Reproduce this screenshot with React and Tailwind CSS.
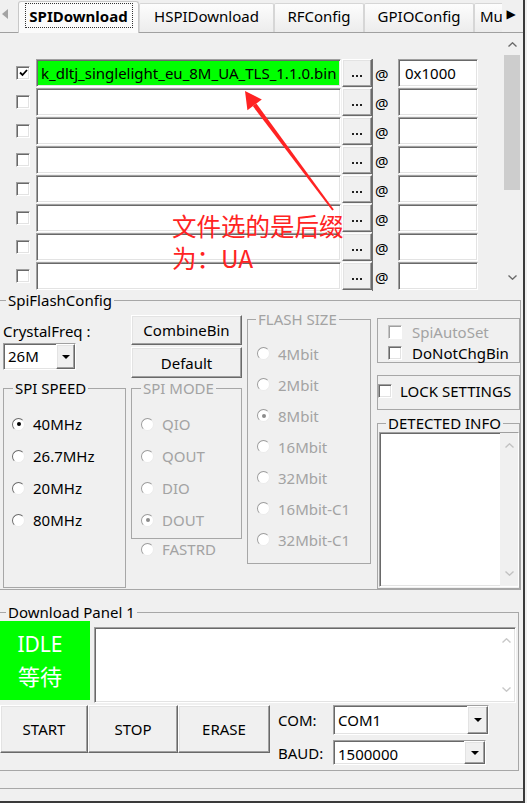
import React from "react";

const sunken =
  "border border-t-[#a0a0a0] border-l-[#a0a0a0] border-r-white border-b-white shadow-[inset_1px_1px_0_#696969,inset_-1px_-1px_0_#e3e3e3]";
const raised =
  "border border-t-white border-l-white border-r-[#696969] border-b-[#696969] bg-[#f0f0f0] shadow-[inset_-1px_-1px_0_#a0a0a0,inset_1px_1px_0_#e3e3e3]";
const groupLine = "border-[#a7a7a7]";

function Check({ checked = false, disabled = false }) {
  return (
    <span
      className={`flex h-[14px] w-[14px] shrink-0 items-center justify-center border border-r-white border-b-white bg-white ${
        disabled
          ? "border-t-[#c4c4c4] border-l-[#c4c4c4] shadow-[inset_1px_1px_0_#a0a0a0]"
          : "border-t-[#a0a0a0] border-l-[#a0a0a0] shadow-[inset_1px_1px_0_#696969,inset_-1px_-1px_0_#e3e3e3]"
      }`}
    >
      {checked && (
        <svg width="9" height="8" viewBox="0 0 9 8">
          <path d="M1 3.5 L3.5 6 L8 1" fill="none" stroke="#000" strokeWidth="1.8" />
        </svg>
      )}
    </span>
  );
}

function Radio({ checked = false, disabled = false }) {
  return (
    <span
      className={`flex h-[13px] w-[13px] shrink-0 items-center justify-center rounded-full border-[1.5px] border-r-[#ececec] border-b-[#ececec] bg-white ${
        disabled ? "border-t-[#9c9c9c] border-l-[#9c9c9c]" : "border-t-[#6a6a6a] border-l-[#6a6a6a]"
      }`}
    >
      {checked && (
        <span className={`h-[4px] w-[4px] rounded-full ${disabled ? "bg-[#8c8c8c]" : "bg-black"}`} />
      )}
    </span>
  );
}

function DownTri() {
  return (
    <svg width="8" height="4" viewBox="0 0 8 4">
      <polygon points="0,0 8,0 4,4" fill="#000" />
    </svg>
  );
}

function Chevron({ up = true, color = "#6a6a6a" }) {
  return (
    <svg width="9" height="5" viewBox="0 0 9 5">
      <polyline
        points={up ? "0.5,4.5 4.5,0.8 8.5,4.5" : "0.5,0.5 4.5,4.2 8.5,0.5"}
        fill="none"
        stroke={color}
        strokeWidth="1.4"
      />
    </svg>
  );
}

function TabBar() {
  return (
    <div className="flex h-[33px] shrink-0 items-start border-b border-[#a0a0a0]">
      <div className="flex h-[28px] w-[18px] shrink-0 items-center pl-[2px]">
        <span className="h-0 w-0 border-y-[5px] border-r-[6px] border-y-transparent border-r-[#a3a3a3]" />
      </div>
      <div className="flex h-[33px] w-[484px] shrink-0 items-start overflow-hidden">
        <div className="relative z-10 mt-[1px] flex h-[32px] w-[121px] shrink-0 items-start justify-center rounded-t-[3px] border border-b-0 border-[#c8c8c8] bg-[#fbfbfb] pt-[1px]">
          <span className="flex h-[25px] w-[108px] items-center justify-center border border-dotted border-[#333] text-[15px] font-bold">
            SPIDownload
          </span>
        </div>
        <div className="mt-[3px] flex h-[29px] w-[135px] shrink-0 items-center justify-center rounded-t-[2px] border border-b-0 border-[#d6d6d6] bg-linear-to-b from-[#fdfdfd] to-[#ececec] pb-[5px]">
          HSPIDownload
        </div>
        <div className="mt-[3px] flex h-[29px] w-[90px] shrink-0 items-center justify-center rounded-t-[2px] border border-b-0 border-[#d6d6d6] bg-linear-to-b from-[#fdfdfd] to-[#ececec] pb-[5px]">
          RFConfig
        </div>
        <div className="mt-[3px] flex h-[29px] w-[110px] shrink-0 items-center justify-center rounded-t-[2px] border border-b-0 border-[#d6d6d6] bg-linear-to-b from-[#fdfdfd] to-[#ececec] pb-[5px]">
          GPIOConfig
        </div>
        <div className="mt-[3px] flex h-[29px] w-[80px] shrink-0 items-center rounded-t-[2px] border border-b-0 border-[#d6d6d6] bg-linear-to-b from-[#fdfdfd] to-[#ececec] pb-[5px] pl-[5px]">
          Mu
        </div>
      </div>
      <div className="flex h-[28px] w-[18px] shrink-0 items-center justify-center font-['DejaVu_Sans',sans-serif] text-[12px] leading-[14px] text-black">
        ▶
      </div>
    </div>
  );
}

function FileRow({ first }) {
  return (
    <div className="flex h-[29px] items-start">
      <div className="flex h-[28px] w-[36px] items-center pl-[16px]">
        <Check checked={first} />
      </div>
      <div
        className={`h-[28px] w-[305px] overflow-hidden whitespace-nowrap pl-[4px] leading-[26px] ${sunken} ${
          first ? "bg-[#00ff00]" : "bg-white"
        }`}
      >
        {first ? "k_dltj_singlelight_eu_8M_UA_TLS_1.1.0.bin" : ""}
      </div>
      <div className={`ml-[1px] flex h-[28px] w-[30px] items-end justify-center gap-[2px] pb-[9px] ${raised}`}>
        <span className="h-[2px] w-[2px] bg-[#222]" />
        <span className="h-[2px] w-[2px] bg-[#222]" />
        <span className="h-[2px] w-[2px] bg-[#222]" />
      </div>
      <div className="flex h-[29px] w-[26px] items-center border-l border-[#707070] pl-[2px]">@</div>
      <div className={`h-[28px] w-[80px] bg-white pl-[6px] leading-[26px] ${sunken}`}>
        {first ? "0x1000" : ""}
      </div>
    </div>
  );
}

function FileRows() {
  const rows = [0, 1, 2, 3, 4, 5, 6, 7];
  return (
    <div className="flex h-[258px] shrink-0">
      <div className="w-[502px] pt-[26px]">
        {rows.map((i) => (
          <FileRow key={i} first={i === 0} />
        ))}
      </div>
      <div className="flex w-[20px] flex-col">
        <div className="flex h-[22px] items-center justify-center">
          <Chevron up />
        </div>
        <div className="mx-[2px] h-[135px] bg-[#cdcdcd]" />
        <div className="flex-1" />
        <div className="mb-[4px] flex h-[20px] items-center justify-center">
          <Chevron up={false} />
        </div>
      </div>
    </div>
  );
}

function RadioRow({ label, checked, disabled, rowClass }) {
  return (
    <div className={`flex items-center ${rowClass}`}>
      <Radio checked={checked} disabled={disabled} />
      <span className={disabled ? "text-[#a3a3a3]" : "text-black"}>{label}</span>
    </div>
  );
}

function FlashConfig() {
  return (
    <fieldset className={`h-[299px] w-[521px] shrink-0 border border-l-0 ${groupLine}`}>
      <legend className="ml-[6px] px-[2px] leading-[18px]">SpiFlashConfig</legend>
      <div className="flex items-start">
        {/* column A */}
        <div className="ml-[3px] flex w-[123px] flex-col">
          <div className="mt-[13px] h-[18px] leading-[18px]">CrystalFreq :</div>
          <div className={`mt-[3px] flex h-[27px] w-[73px] bg-white ${sunken}`}>
            <div className="flex-1 pl-[4px] leading-[25px]">26M</div>
            <div className={`flex w-[19px] items-center justify-center ${raised}`}>
              <DownTri />
            </div>
          </div>
          <fieldset className={`mt-[9px] h-[209px] border ${groupLine}`}>
            <legend className="ml-[9px] px-[2px] leading-[18px]">SPI SPEED</legend>
            <div className="mt-[11px]">
              <RadioRow label="40MHz" checked rowClass="h-[32px] pl-[8px] gap-[8px]" />
              <RadioRow label="26.7MHz" rowClass="h-[32px] pl-[8px] gap-[8px]" />
              <RadioRow label="20MHz" rowClass="h-[32px] pl-[8px] gap-[8px]" />
              <RadioRow label="80MHz" rowClass="h-[32px] pl-[8px] gap-[8px]" />
            </div>
          </fieldset>
        </div>

        {/* column B */}
        <div className="ml-[5px] flex w-[111px] flex-col">
          <div className={`mt-[6px] flex h-[30px] items-center justify-center ${raised}`}>CombineBin</div>
          <div className={`mt-[2px] flex h-[31px] items-center justify-center ${raised}`}>Default</div>
          <fieldset className={`mt-[1px] h-[160px] border ${groupLine}`}>
            <legend className="ml-[9px] px-[2px] leading-[18px] text-[#a3a3a3]">SPI MODE</legend>
            <div className="mt-[11px]">
              <RadioRow label="QIO" disabled rowClass="h-[32px] pl-[9px] gap-[8px]" />
              <RadioRow label="QOUT" disabled rowClass="h-[32px] pl-[9px] gap-[8px]" />
              <RadioRow label="DIO" disabled rowClass="h-[32px] pl-[9px] gap-[8px]" />
              <RadioRow label="DOUT" disabled checked rowClass="h-[32px] pl-[9px] gap-[8px]" />
            </div>
          </fieldset>
          <RadioRow label="FASTRD" disabled rowClass="h-[20px] pl-[10px] gap-[8px]" />
        </div>

        {/* column C */}
        <div className="ml-[5px] flex w-[124px] flex-col">
          <fieldset className={`mt-[1px] h-[254px] border ${groupLine}`}>
            <legend className="ml-[8px] px-[2px] leading-[18px] text-[#a3a3a3]">FLASH SIZE</legend>
            <div className="mt-[10px]">
              <RadioRow label="4Mbit" disabled rowClass="h-[31px] pl-[9px] gap-[8px]" />
              <RadioRow label="2Mbit" disabled rowClass="h-[31px] pl-[9px] gap-[8px]" />
              <RadioRow label="8Mbit" disabled checked rowClass="h-[31px] pl-[9px] gap-[8px]" />
              <RadioRow label="16Mbit" disabled rowClass="h-[31px] pl-[9px] gap-[8px]" />
              <RadioRow label="32Mbit" disabled rowClass="h-[31px] pl-[9px] gap-[8px]" />
              <RadioRow label="16Mbit-C1" disabled rowClass="h-[31px] pl-[9px] gap-[8px]" />
              <RadioRow label="32Mbit-C1" disabled rowClass="h-[31px] pl-[9px] gap-[8px]" />
            </div>
          </fieldset>
        </div>

        {/* column D */}
        <div className="ml-[6px] flex w-[143px] flex-col">
          <div className={`mt-[9px] h-[45px] border ${groupLine} pt-[2px]`}>
            <div className="flex h-[21px] items-center gap-[10px] pl-[10px]">
              <Check disabled />
              <span className="text-[#a3a3a3]">SpiAutoSet</span>
            </div>
            <div className="flex h-[21px] items-center gap-[10px] pl-[10px]">
              <Check />
              <span>DoNotChgBin</span>
            </div>
          </div>
          <div className={`mt-[12px] flex h-[35px] items-center gap-[8px] border ${groupLine} pb-[4px]`}>
            <Check />
            <span>LOCK SETTINGS</span>
          </div>
          <fieldset className={`mt-[4px] h-[175px] border ${groupLine}`}>
            <legend className="ml-[8px] px-[2px] leading-[18px]">DETECTED INFO</legend>
            <div className={`ml-[1px] flex h-[155px] bg-white ${sunken}`}>
              <div className="flex-1" />
              <div className="flex w-[18px] flex-col items-center justify-between bg-[#f0f0f0] py-[10px]">
                <Chevron up color="#c2c2c2" />
                <Chevron up={false} color="#c2c2c2" />
              </div>
            </div>
          </fieldset>
        </div>
      </div>
    </fieldset>
  );
}

function DownloadPanel() {
  return (
    <fieldset className={`mt-[13px] h-[168px] w-[519px] shrink-0 border border-l-0 ${groupLine}`}>
      <legend className="ml-[6px] px-[2px] leading-[18px]">Download Panel 1</legend>
      <div className="flex items-start">
        <div className="flex h-[79px] w-[90px] flex-col items-center justify-center bg-[#00ff00] pr-[10px] text-white">
          <span className="text-[21px] leading-[29px]">IDLE</span>
          <span className="font-['Noto_Sans_CJK_SC',sans-serif] text-[22px] leading-[32px]">等待</span>
        </div>
        <div className={`ml-[4px] mt-[6px] flex h-[76px] w-[422px] bg-white ${sunken}`}>
          <div className="flex-1" />
          <div className="flex w-[18px] flex-col items-center justify-between pb-[10px] pt-[10px]">
            <Chevron up color="#c8c8c8" />
            <Chevron up={false} color="#c8c8c8" />
          </div>
        </div>
      </div>
      <div className="mt-[2px] flex items-start">
        <div className={`flex h-[48px] w-[88px] items-center justify-center ${raised}`}>START</div>
        <div className={`flex h-[48px] w-[90px] items-center justify-center ${raised}`}>STOP</div>
        <div className={`flex h-[48px] w-[92px] items-center justify-center ${raised}`}>ERASE</div>
        <div className="ml-[8px] flex flex-col">
          <div className="flex h-[30px] items-center">
            <span className="w-[55px]">COM:</span>
            <div className={`flex h-[30px] w-[156px] bg-white ${sunken}`}>
              <div className="flex-1 pl-[4px] leading-[28px]">COM1</div>
              <div className={`flex w-[21px] items-center justify-center ${raised}`}>
                <DownTri />
              </div>
            </div>
          </div>
          <div className="mt-[5px] flex h-[25px] items-center">
            <span className="w-[55px]">BAUD:</span>
            <div className={`flex h-[25px] w-[153px] bg-white ${sunken}`}>
              <div className="flex-1 pl-[4px] pt-[3px] leading-[20px]">1500000</div>
              <div className={`flex w-[21px] items-center justify-center ${raised}`}>
                <DownTri />
              </div>
            </div>
          </div>
        </div>
      </div>
    </fieldset>
  );
}

function Annotation() {
  return (
    <>
      <svg className="pointer-events-none absolute left-0 top-0" width="527" height="803">
        <polygon points="252.8,106.1 256.4,103.5 333.8,209.4 332.2,210.6" fill="#ff2323" />
        <polygon points="245,91 261.8,99.4 247.4,110.2" fill="#ff2323" />
      </svg>
      <div className="pointer-events-none absolute left-[172px] top-[210px] font-['Noto_Sans_CJK_SC',sans-serif] text-[24.5px] leading-[32px] text-[#ff2323]">
        文件选的是后缀
        <br />
        为：UA
      </div>
    </>
  );
}

export default function App() {
  return (
    <div className="relative flex h-[803px] w-[527px] overflow-hidden bg-[#f0f0f0] font-['Noto_Sans','Noto_Sans_CJK_SC',sans-serif] text-[15px] leading-[18px] text-black">
      <div className="flex w-[523px] shrink-0 flex-col">
        <TabBar />
        <FileRows />
        <FlashConfig />
        <DownloadPanel />
        <div className="h-[17px] shrink-0" />
        <div className="h-[13px] shrink-0 border-t border-[#a8a8a8]" />
        <div className="h-[2px] shrink-0 bg-[#3a3a3a]" />
      </div>
      <div className="w-[2px] shrink-0 bg-[#3a3a3a]" />
      <div className="flex-1" />
      <Annotation />
    </div>
  );
}
